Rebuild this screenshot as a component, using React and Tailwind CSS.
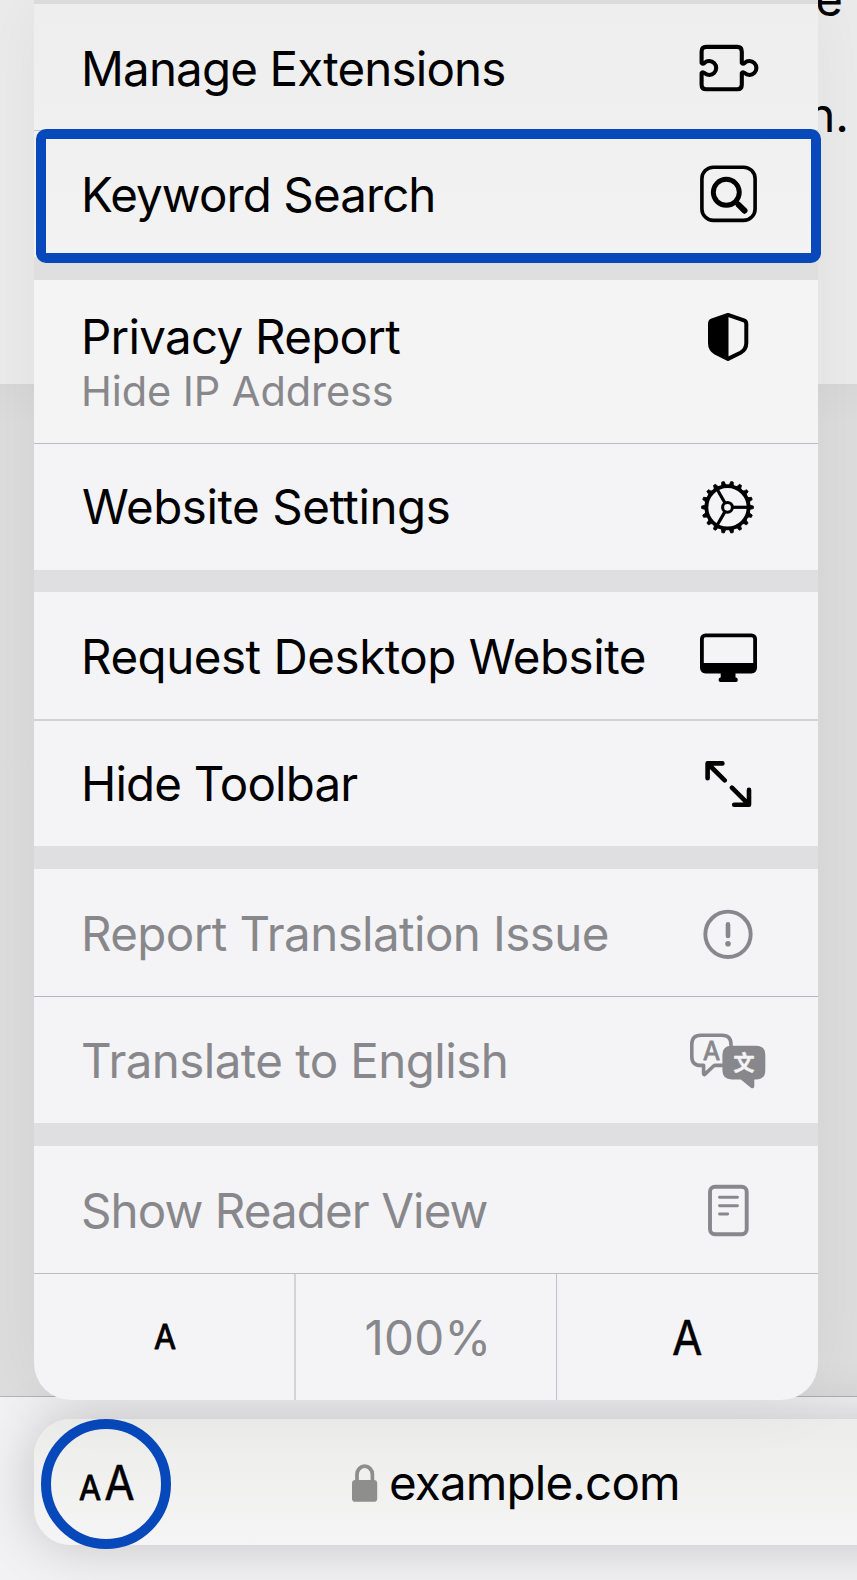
function Icon({ top, height, children }) {
  return (
    <svg
      className="shrink-0"
      width="80"
      height={height}
      viewBox={`688 ${top} 80 ${height}`}
      fill="none"
      stroke="currentColor"
      strokeLinecap="round"
      strokeLinejoin="round"
    >
      {children}
    </svg>
  );
}

function Row({ className, labelClass, label, children }) {
  return (
    <div className={`flex items-center justify-between pr-[50px] pl-[47px] ${className}`}>
      <span className={`text-[47.5px] leading-[58px] whitespace-nowrap ${labelClass}`}>{label}</span>
      {children}
    </div>
  );
}

const Divider = ({ className = 'bg-[#bcbcbf]' }) => <div className={`h-px ${className}`} />;
const Gap = ({ className }) => <div className={className} />;

const TEETH = Array.from({ length: 18 }, (_, i) => i * 20);

function Menu() {
  return (
    <div className="flex h-[1400px] w-[784px] flex-col overflow-hidden rounded-b-[37px] bg-[#f4f4f6] text-black shadow-[0_0_70px_rgba(0,0,0,0.055)]">
      <Gap className="h-[4px] bg-[#dbdbdb]" />

      <Row className="h-[126px] bg-linear-to-b from-[#eeeeee] to-[#f0f0f0]" label="Manage Extensions" labelClass="pt-[3px] tracking-[-0.85px]">
        <Icon top={4} height={126}>
          <path
            strokeWidth="4.1"
            d="M706.3 46.9H737.3Q741.8 46.9 741.8 51.4V63Q742.8 64.6 744.6 62.9A7 7 0 1 1 744.6 73.1Q742.8 71.4 741.8 73V84.7Q741.8 89.2 737.3 89.2H706.3Q701.6 89.2 701.6 84.7V73Q702.6 71.4 704.4 73.1A7 7 0 1 0 704.4 62.9Q702.6 64.6 701.6 63V51.4Q701.6 46.9 706.3 46.9Z"
          />
        </Icon>
      </Row>
      <Divider className="bg-[#c4c4c4]" />
      <Row className="h-[126px] bg-linear-to-b from-[#f0f0f0] to-[#f3f3f3]" label="Keyword Search" labelClass="pt-[2px] tracking-[-0.9px]">
        <Icon top={131} height={126}>
          <rect x="701.9" y="167.2" width="53.2" height="53.2" rx="11.5" strokeWidth="3.6" />
          <circle cx="726.3" cy="192.3" r="13" strokeWidth="4.9" />
          <path strokeWidth="4.8" d="M736 202L740 206" />
          <path strokeWidth="6" d="M738.8 205L744.5 210.7" />
        </Icon>
      </Row>
      <Gap className="h-[23px] bg-[#dfdfdf]" />

      <div className="flex h-[163px] items-start justify-between bg-[#f4f4f5] pt-[28px] pr-[50px] pl-[47px]">
        <div className="whitespace-nowrap">
          <p className="text-[47.5px] leading-[57px] tracking-[-0.72px]">Privacy Report</p>
          <p className="text-[41.5px] leading-[53px] tracking-[-0.08px] text-[#88888c]">Hide IP Address</p>
        </div>
        <Icon top={308} height={60}>
          <path
            strokeWidth="4"
            d="M728 314.9L743.9 320.3Q746.3 321.2 746.3 323.8V343Q746.3 349.5 740.5 352.7L728 358.9L715.5 352.7Q710 349.5 710 343V323.8Q710 321.2 712.2 320.3Z"
          />
          <path fill="currentColor" stroke="none" d="M728.5 314V360L714 352.5Q710 349 710 343V321Z" />
        </Icon>
      </div>
      <Divider />
      <Row className="h-[126px]" label="Website Settings" labelClass="pl-px tracking-[-0.46px]">
        <Icon top={444} height={126}>
          <circle cx="727.5" cy="507.3" r="21.1" strokeWidth="3.8" />
          <circle cx="727.5" cy="507.3" r="4.9" strokeWidth="3" />
          {[0, 120, 240].map((a) => (
            <path key={a} strokeWidth="3.2" strokeLinecap="butt" transform={`rotate(${a} 727.5 507.3)`} d="M732.5 507.3H748" />
          ))}
          {TEETH.map((a) => (
            <path
              key={a}
              fill="currentColor"
              strokeWidth="0.8"
              transform={`rotate(${a} 727.5 507.3)`}
              d="M749 504.4Q750.6 505.7 753.4 506.1V508.5Q750.6 508.9 749 510.2Z"
            />
          ))}
        </Icon>
      </Row>
      <Gap className="h-[22px] bg-[#dfdfe1]" />

      <Row className="h-[127px]" label="Request Desktop Website" labelClass="pt-[3px] tracking-[-0.48px]">
        <Icon top={592} height={127}>
          <rect x="701.9" y="635.3" width="53.2" height="36.2" rx="3.6" strokeWidth="3.8" />
          <path fill="currentColor" stroke="none" d="M701 663H756V669Q756 673 752 673H705Q701 673 701 669Z" />
          <path fill="currentColor" stroke="none" d="M720.7 672H735.5V677.6H736Q737.8 678 737.8 679.9T736 682H720.4Q718.6 682 718.6 679.9T720.4 677.6H720.7Z" />
        </Icon>
      </Row>
      <Gap className="h-[2px] bg-[#d2d2d5]" />
      <Row className="h-[125px]" label="Hide Toolbar" labelClass="pt-px tracking-[-0.85px]">
        <Icon top={721} height={125}>
          <g strokeWidth="4.6">
            <path d="M707.6 778.2V763.4H722.4M708.2 764L724.7 780.4" />
            <path d="M749 789.9V804.7H734.2M748.4 804.1L731.9 787.7" />
          </g>
        </Icon>
      </Row>
      <Gap className="h-[23px] bg-[#dfdfe1]" />

      <Row className="h-[127px] text-[#88888c]" label="Report Translation Issue" labelClass="pt-[3px] tracking-[-0.6px]">
        <Icon top={869} height={127}>
          <circle cx="728" cy="934.3" r="22.7" strokeWidth="3.9" />
          <path strokeWidth="4.6" d="M728 924.4V936" />
          <circle cx="728" cy="943.8" r="2.8" fill="currentColor" stroke="none" />
        </Icon>
      </Row>
      <Divider className="bg-[#b6b6ba]" />
      <Row className="h-[126px] text-[#88888c]" label="Translate to English" labelClass="pt-px tracking-[-0.58px]">
        <Icon top={997} height={126}>
          <path
            strokeWidth="3.6"
            d="M731 1045.5V1044.3Q731 1035.2 722 1035.2H700.8Q691.8 1035.2 691.8 1044.3V1056.4Q691.8 1065.4 700.8 1065.4H703.6V1073.8Q703.8 1075.2 705 1074.1L713.6 1066Q714.3 1065.4 715.5 1065.4H722.5"
          />
          <text
            transform="translate(711.6 1059.8) scale(0.95 1)"
            textAnchor="middle"
            fill="currentColor"
            strokeWidth="0.9"
            className="font-['Inter',sans-serif] text-[26px]"
          >
            A
          </text>
          <path
            fill="currentColor"
            stroke="none"
            d="M731.8 1045.7H756Q765.3 1045.7 765.3 1055V1070.2Q765.3 1079.4 756 1079.4H754.3V1086.4Q753.7 1089.3 751.2 1087.9L740.8 1079.4H731.8Q722.4 1079.4 722.4 1070.2V1055Q722.4 1045.7 731.8 1045.7Z"
          />
          <text
            x="744"
            y="1070"
            textAnchor="middle"
            fill="#f4f4f6"
            stroke="#f4f4f6"
            strokeWidth="0.5"
            className="font-['Noto_Sans_CJK_SC',sans-serif] text-[21px] font-bold"
          >
            文
          </text>
        </Icon>
      </Row>
      <Gap className="h-[23px] bg-[#dfdfe1]" />

      <Row className="h-[127px] text-[#88888c]" label="Show Reader View" labelClass="pt-[3px] tracking-[-0.91px]">
        <Icon top={1146} height={127}>
          <rect x="710" y="1186.7" width="36.7" height="47.6" rx="5" strokeWidth="3.9" />
          <path strokeWidth="2.9" d="M719.5 1197.3H737.5M719.5 1205.7H737.5M719.5 1214H727.7" />
        </Icon>
      </Row>
      <Divider />
      <div className="flex h-[126px]">
        <div className="flex w-[260px] items-center justify-center">
          <GlyphA height={126} />
        </div>
        <div className="w-[2px] bg-[#d3d3d6]" />
        <div className="flex w-[260px] items-center justify-center pt-[2px] pl-[4px] text-[47.5px] leading-[58px] tracking-[0.3px] text-[#88888c]">
          100%
        </div>
        <div className="w-px bg-[#c1c1c5]" />
        <div className="flex grow items-center justify-center">
          <GlyphA big height={126} />
        </div>
      </div>
    </div>
  );
}

function GlyphA({ big, height }) {
  return (
    <svg width="40" height={height} viewBox={`0 0 40 ${height}`}>
      <text
        transform={big ? 'translate(19.3 81.2) scale(0.92 1)' : 'translate(21 75.4) scale(0.94 1)'}
        textAnchor="middle"
        stroke="currentColor"
        strokeWidth={big ? 0.5 : 0.9}
        strokeLinejoin="round"
        className={big ? "font-['Inter',sans-serif] text-[48px]" : "font-['Inter',sans-serif] text-[34px]"}
      >
        A
      </text>
    </svg>
  );
}

function AddressBar() {
  return (
    <div className="flex h-[126px] w-[900px] items-center rounded-l-[37px] bg-linear-to-b from-[#ececeb] to-[#f5f5f5] shadow-[0_0_56px_rgba(0,0,0,0.2)]">
      <div className="-mb-[4px] ml-[7px] flex h-[130px] w-[130px] shrink-0 items-center justify-center rounded-full border-[10px] border-[#0748bb]">
        <svg width="110" height="110" viewBox="51 1429 110 110">
          <g
            textAnchor="middle"
            stroke="currentColor"
            strokeLinejoin="round"
            className="font-['Inter',sans-serif]"
          >
            <text transform="translate(90 1500.2) scale(0.94 1)" strokeWidth="0.9" className="text-[34px]">A</text>
            <text transform="translate(119.5 1500.2) scale(0.92 1)" strokeWidth="0.5" className="text-[48px]">A</text>
          </g>
        </svg>
      </div>
      <svg className="mt-[2px] ml-[179px] shrink-0" width="30" height="42" viewBox="350 1462 30 42" fill="none">
        <path d="M357 1482V1474.5A7.7 8.3 0 0 1 372.4 1474.5V1482" stroke="#8e8e8c" strokeWidth="3.7" />
        <rect x="352" y="1480" width="25.2" height="21.8" rx="3.4" fill="#8e8e8c" />
      </svg>
      <span className="ml-[9px] pt-[2px] text-[47.5px] leading-[58px] tracking-[-0.84px]">example.com</span>
    </div>
  );
}

export default function App() {
  return (
    <div className="relative h-[1580px] w-[857px] overflow-hidden bg-[#dcdcdc] font-['Inter',sans-serif] text-black">
      <div className="flex h-full flex-col">
        <div className="flex h-[384px] flex-col items-end bg-[#ebebeb] pr-[8px] text-[47.5px] leading-[58px]">
          <p className="-mt-[30px] pr-[6px]">e</p>
          <p className="mt-[58px]">n.</p>
        </div>
        <div className="h-[1012px] bg-linear-to-b from-[#d8d8d8] to-[#dddddd] to-[40px]" />
        <div className="grow border-t border-[#b4b4b6] bg-[#f2f2f4] pt-[22px] pl-[34px]">
          <AddressBar />
        </div>
      </div>

      <div className="absolute top-0 left-[34px]">
        <Menu />
      </div>
      <div className="absolute top-[129px] left-[36px] h-[134px] w-[785px] rounded-[10px] border-[10px] border-[#0748bb]" />
    </div>
  );
}
